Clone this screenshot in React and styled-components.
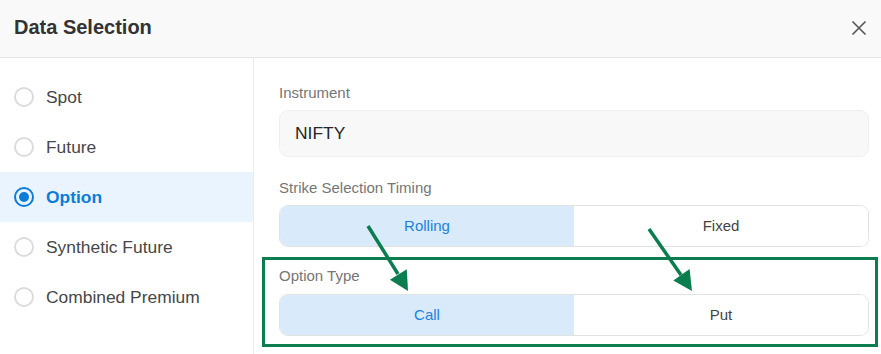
import React from "react";
import styled, { createGlobalStyle } from "styled-components";

const GlobalStyle = createGlobalStyle`
  html, body { margin: 0; padding: 0; background: #ffffff; }
  body { font-family: "Liberation Sans", Arial, sans-serif; }
  * { box-sizing: border-box; }
`;

const Dialog = styled.div`
  position: relative;
  width: 881px;
  height: 354px;
  display: flex;
  flex-direction: column;
  background: #ffffff;
  overflow: hidden;
`;

const Header = styled.div`
  height: 58px;
  flex: 0 0 58px;
  display: flex;
  align-items: center;
  justify-content: space-between;
  padding: 0 14px 2px 14px;
  background: #f9f9f9;
  border-bottom: 1px solid #e4e4e4;
`;

const Title = styled.h2`
  margin: 0;
  font-size: 20px;
  font-weight: 700;
  color: #333333;
  letter-spacing: 0;
`;

const CloseButton = styled.button`
  width: 20px;
  height: 20px;
  padding: 0;
  margin-right: -2px;
  border: none;
  background: transparent;
  display: flex;
  align-items: center;
  justify-content: center;
  cursor: pointer;
`;

const Body = styled.div`
  flex: 1;
  display: flex;
`;

const Sidebar = styled.div`
  width: 254px;
  flex: 0 0 254px;
  border-right: 1px solid #ececec;
  padding-top: 14px;
  display: flex;
  flex-direction: column;
`;

const SideItem = styled.div`
  height: 50px;
  display: flex;
  align-items: center;
  gap: 12px;
  padding-left: 14px;
  background: ${(p) => (p.$active ? "#eaf4fe" : "transparent")};
  color: ${(p) => (p.$active ? "#0b7dd8" : "#474747")};
  font-weight: ${(p) => (p.$active ? 700 : 400)};
  font-size: 17.4px;
`;

const Radio = styled.span`
  width: 20px;
  height: 20px;
  border-radius: 50%;
  border: 2px solid ${(p) => (p.$active ? "#0b7dd8" : "#dcdcdc")};
  display: flex;
  align-items: center;
  justify-content: center;
  flex: 0 0 20px;
  &::after {
    content: "";
    display: ${(p) => (p.$active ? "block" : "none")};
    width: 10px;
    height: 10px;
    border-radius: 50%;
    background: #0b7dd8;
  }
`;

const Panel = styled.div`
  flex: 1;
  padding: 26px 12px 0 25px;
  display: flex;
  flex-direction: column;
`;

const Field = styled.div`
  display: flex;
  flex-direction: column;
  gap: 8px;
  margin-bottom: ${(p) => p.$mb || 0}px;
`;

const Label = styled.div`
  font-size: 15px;
  line-height: 18px;
  color: #767676;
`;

const InputBox = styled.div`
  height: 47px;
  display: flex;
  align-items: center;
  padding-left: 15px;
  background: #f8f8f8;
  border: 1px solid #efefef;
  border-radius: 9px;
  font-size: 17.4px;
  color: #262626;
`;

const Toggle = styled.div`
  height: 42px;
  display: flex;
  border: 1px solid #e2e2e2;
  border-radius: 9px;
  overflow: hidden;
`;

const Segment = styled.div`
  flex: 1;
  display: flex;
  align-items: center;
  justify-content: center;
  font-size: 15px;
  padding-bottom: 1px;
  background: ${(p) => (p.$active ? "#d9eafb" : "#ffffff")};
  color: ${(p) => (p.$active ? "#1b82dc" : "#444444")};
`;

const Highlight = styled.div`
  margin: 10px -9px 0 -17px;
  padding: 7px 6px 8px 14px;
  border: 3px solid #0b7d4e;
  display: flex;
  flex-direction: column;
  gap: 9px;
`;

const Arrows = styled.svg`
  position: absolute;
  left: 0;
  top: 0;
  width: 881px;
  height: 354px;
  pointer-events: none;
`;

const options = ["Spot", "Future", "Option", "Synthetic Future", "Combined Premium"];

export default function App() {
  return (
    <>
      <GlobalStyle />
      <Dialog>
        <Header>
          <Title>Data Selection</Title>
          <CloseButton aria-label="close">
            <svg width="16" height="16" viewBox="0 0 16 16">
              <path d="M1.5 1.5 L14.5 14.5 M14.5 1.5 L1.5 14.5" stroke="#555" strokeWidth="1.6" fill="none" />
            </svg>
          </CloseButton>
        </Header>
        <Body>
          <Sidebar>
            {options.map((o) => (
              <SideItem key={o} $active={o === "Option"}>
                <Radio $active={o === "Option"} />
                <span>{o}</span>
              </SideItem>
            ))}
          </Sidebar>
          <Panel>
            <Field $mb={22}>
              <Label>Instrument</Label>
              <InputBox>NIFTY</InputBox>
            </Field>
            <Field>
              <Label>Strike Selection Timing</Label>
              <Toggle>
                <Segment $active>Rolling</Segment>
                <Segment>Fixed</Segment>
              </Toggle>
            </Field>
            <Highlight>
              <Label>Option Type</Label>
              <Toggle>
                <Segment $active>Call</Segment>
                <Segment>Put</Segment>
              </Toggle>
            </Highlight>
          </Panel>
        </Body>
        <Arrows viewBox="0 0 881 354">
          <line x1="368" y1="226" x2="398" y2="274" stroke="#0b7d4e" strokeWidth="3.5" />
          <polygon points="389.9,279.8 406.8,269.2 408,291" fill="#0b7d4e" />
          <line x1="649" y1="229" x2="681" y2="275" stroke="#0b7d4e" strokeWidth="3.5" />
          <polygon points="673.3,280.5 689.6,269.0 692,291" fill="#0b7d4e" />
        </Arrows>
      </Dialog>
    </>
  );
}
